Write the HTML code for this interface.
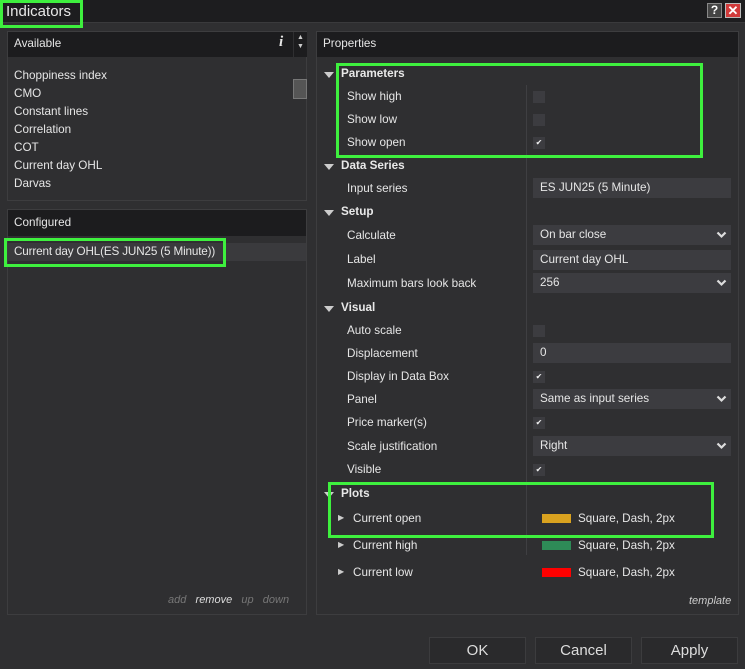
<!DOCTYPE html>
<html><head><style>
*{margin:0;padding:0;box-sizing:border-box}
body{width:745px;height:669px;background:#2f2f31;font-family:"Liberation Sans",sans-serif;font-size:11.7px;color:#e6e6e6;position:relative;overflow:hidden}
.a{position:absolute}
.t{position:absolute;white-space:nowrap}
.g{position:absolute;border:3px solid #3ef03e}
.hdr{background:#1c1c1e}
.val{position:absolute;left:533px;width:198px;height:20px;background:#3c3c40;padding-left:7px;line-height:20px}
.cb{position:absolute;left:533px;width:12px;height:12px;background:#3c3c40;font-size:8px;line-height:12px;text-align:center;color:#eee}
.chev{position:absolute;right:4px;top:6px;width:11px;height:8px}
.tri{position:absolute;left:324px;width:0;height:0;border-left:5px solid transparent;border-right:5px solid transparent;border-top:6px solid #ccc}
.sec{position:absolute;left:341px;font-weight:bold;color:#e8e8e8}
.lbl{position:absolute;left:347px}
.btn{position:absolute;top:637px;width:97px;height:27px;border:1px solid #3c3c3e;background:#2a2a2c;text-align:center;line-height:26px;font-size:15px;color:#ddd}
</style></head><body>
<div class="a" style="left:0;top:0;width:745px;height:22px;background:#1d1d1f"></div>
<div class="a" style="left:0;top:22px;width:745px;height:1px;background:#3a3a3c"></div>
<div class="t" style="left:6px;top:3px;font-size:15px;color:#e8e8e8">Indicators</div>
<div class="a" style="left:707px;top:3px;width:15px;height:15px;background:#444;border:1px solid #888;color:#fff;font-weight:bold;font-size:12px;text-align:center;line-height:13px">?</div>
<div class="a" style="left:725px;top:3px;width:16px;height:15px;background:#d03a3a;border:1px solid #bbb;color:#fff;font-weight:bold;font-size:13px;text-align:center;line-height:13px">✕</div>

<div class="a" style="left:7px;top:31px;width:300px;height:170px;border:1px solid #3d3d3f"></div>
<div class="a hdr" style="left:8px;top:32px;width:285px;height:25px"></div>
<div class="a hdr" style="left:294px;top:32px;width:13px;height:25px"></div>
<div class="t" style="left:14px;top:37px">Available</div>
<div class="t" style="left:279px;top:34px;font-style:italic;font-weight:bold;font-family:'Liberation Serif',serif;font-size:15px">i</div>
<div class="t" style="left:297px;top:33px;font-size:7px;color:#ccc;line-height:9px">▲<br>▼</div>
<div class="a" style="left:293px;top:79px;width:14px;height:20px;background:#555;border:1px solid #777"></div>
<div class="t" style="left:14px;top:67px;line-height:18px">Choppiness index<br>CMO<br>Constant lines<br>Correlation<br>COT<br>Current day OHL<br>Darvas</div>

<div class="a" style="left:7px;top:209px;width:300px;height:406px;border:1px solid #3d3d3f"></div>
<div class="a hdr" style="left:8px;top:210px;width:298px;height:26px"></div>
<div class="t" style="left:14px;top:216px">Configured</div>
<div class="a" style="left:8px;top:243px;width:298px;height:18px;background:#3a3a3d"></div>
<div class="t" style="left:14px;top:245px;letter-spacing:-0.15px">Current day OHL(ES JUN25 (5 Minute))</div>
<div class="t" style="left:168px;top:594px;font-style:italic;color:#777;font-size:11px">add &nbsp; <span style="color:#ddd">remove</span> &nbsp; up &nbsp; down</div>

<div class="a" style="left:316px;top:31px;width:423px;height:584px;border:1px solid #3d3d3f"></div>
<div class="a hdr" style="left:317px;top:32px;width:421px;height:25px"></div>
<div class="t" style="left:323px;top:37px">Properties</div>
<div class="a" style="left:526px;top:85px;width:1px;height:470px;background:#3f3f42"></div>

<div class="tri" style="top:72px"></div><div class="sec" style="top:67px">Parameters</div>
<div class="lbl" style="top:90px">Show high</div><div class="cb" style="top:91px"></div>
<div class="lbl" style="top:113px">Show low</div><div class="cb" style="top:114px"></div>
<div class="lbl" style="top:136px">Show open</div><div class="cb" style="top:137px">✔</div>
<div class="tri" style="top:164px"></div><div class="sec" style="top:159px">Data Series</div>
<div class="lbl" style="top:182px">Input series</div><div class="val" style="top:178px">ES JUN25 (5 Minute)</div>
<div class="tri" style="top:210px"></div><div class="sec" style="top:205px">Setup</div>
<div class="lbl" style="top:229px">Calculate</div><div class="val" style="top:225px">On bar close<svg class="chev" viewBox="0 0 11 8"><path d="M1.5 1.5L5.5 5.5L9.5 1.5" stroke="#ddd" stroke-width="2.2" fill="none"/></svg></div>
<div class="lbl" style="top:253px">Label</div><div class="val" style="top:250px">Current day OHL</div>
<div class="lbl" style="top:277px">Maximum bars look back</div><div class="val" style="top:273px">256<svg class="chev" viewBox="0 0 11 8"><path d="M1.5 1.5L5.5 5.5L9.5 1.5" stroke="#ddd" stroke-width="2.2" fill="none"/></svg></div>
<div class="tri" style="top:306px"></div><div class="sec" style="top:301px">Visual</div>
<div class="lbl" style="top:324px">Auto scale</div><div class="cb" style="top:325px"></div>
<div class="lbl" style="top:347px">Displacement</div><div class="val" style="top:343px">0</div>
<div class="lbl" style="top:370px">Display in Data Box</div><div class="cb" style="top:371px">✔</div>
<div class="lbl" style="top:393px">Panel</div><div class="val" style="top:389px">Same as input series<svg class="chev" viewBox="0 0 11 8"><path d="M1.5 1.5L5.5 5.5L9.5 1.5" stroke="#ddd" stroke-width="2.2" fill="none"/></svg></div>
<div class="lbl" style="top:416px">Price marker(s)</div><div class="cb" style="top:417px">✔</div>
<div class="lbl" style="top:440px">Scale justification</div><div class="val" style="top:436px">Right<svg class="chev" viewBox="0 0 11 8"><path d="M1.5 1.5L5.5 5.5L9.5 1.5" stroke="#ddd" stroke-width="2.2" fill="none"/></svg></div>
<div class="lbl" style="top:463px">Visible</div><div class="cb" style="top:464px">✔</div>
<div class="tri" style="top:492px"></div><div class="sec" style="top:487px">Plots</div>
<div class="t" style="left:338px;top:513px;font-size:8px;color:#ccc">▶</div><div class="t" style="left:353px;top:512px">Current open</div>
<div class="a" style="left:542px;top:514px;width:29px;height:9px;background:#d9a21f"></div><div class="t" style="left:578px;top:512px">Square, Dash, 2px</div>
<div class="t" style="left:338px;top:540px;font-size:8px;color:#ccc">▶</div><div class="t" style="left:353px;top:539px">Current high</div>
<div class="a" style="left:542px;top:541px;width:29px;height:9px;background:#2e8b57"></div><div class="t" style="left:578px;top:539px">Square, Dash, 2px</div>
<div class="t" style="left:338px;top:567px;font-size:8px;color:#ccc">▶</div><div class="t" style="left:353px;top:566px">Current low</div>
<div class="a" style="left:542px;top:568px;width:29px;height:9px;background:#f00"></div><div class="t" style="left:578px;top:566px">Square, Dash, 2px</div>
<div class="t" style="left:689px;top:595px;font-style:italic;font-size:11px;color:#ccc">template</div>

<div class="btn" style="left:429px">OK</div>
<div class="btn" style="left:535px">Cancel</div>
<div class="btn" style="left:641px">Apply</div>

<div class="g" style="left:0;top:0;width:83px;height:28px"></div>
<div class="g" style="left:336px;top:63px;width:367px;height:95px"></div>
<div class="g" style="left:4px;top:238px;width:222px;height:29px"></div>
<div class="g" style="left:328px;top:482px;width:386px;height:56px"></div>
</body></html>
